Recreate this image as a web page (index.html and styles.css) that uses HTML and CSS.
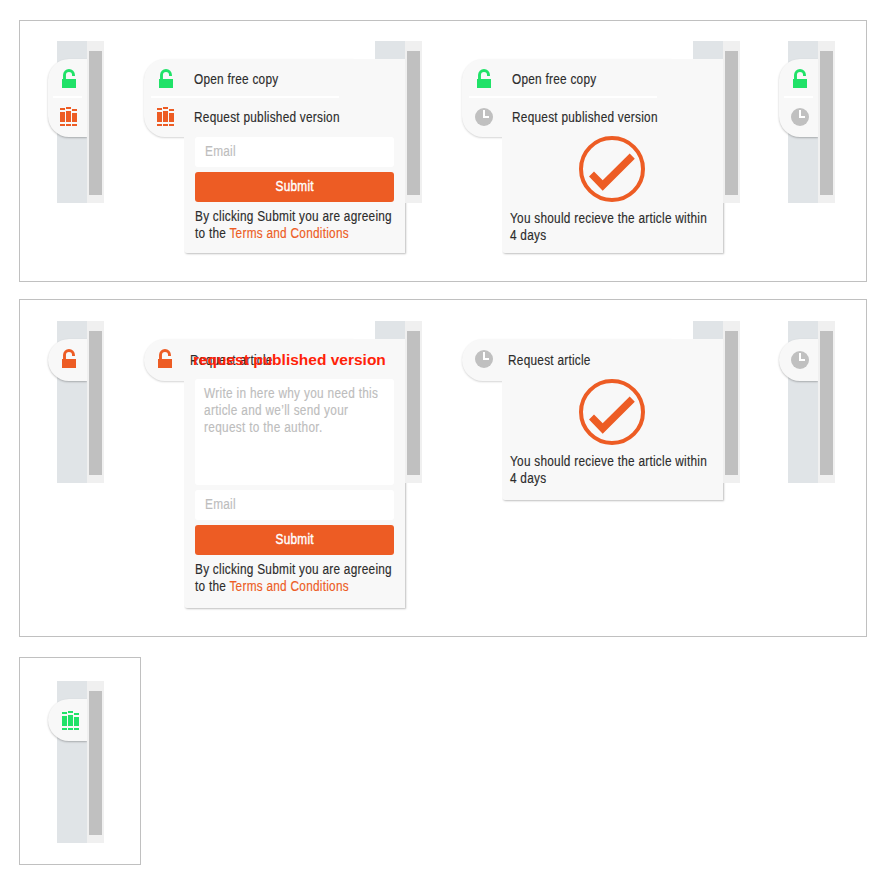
FILE: index.html
```html
<!DOCTYPE html>
<html lang="en">
<head>
<meta charset="utf-8">
<title>Article access widget</title>
<link rel="stylesheet" href="styles.css">
</head>
<body>
<svg class="sprite">
  <symbol id="lock" viewBox="0 0 14 19"><path d="M0 10H14V19H0Z" fill="currentColor"/><path d="M2.5 11V6a4.5 4.5 0 0 1 9 0V7" fill="none" stroke="currentColor" stroke-width="2.9"/></symbol>
  <symbol id="books" viewBox="0 0 17 19"><path fill="currentColor" d="M0 1h5v2H0zM6 0h5v2H6zM12 2h5v2h-5zM0 5h5v10H0zM6 4h5v11H6zM12 6h5v9h-5zM0 17h5v2H0zM6 17h5v2H6zM12 17h5v2h-5z"/></symbol>
  <symbol id="clock" viewBox="0 0 18 18"><circle cx="9" cy="9" r="9" fill="currentColor"/><path d="M8 2h2v6h4v2H8z" fill="#fff"/></symbol>
  <symbol id="check" viewBox="0 0 66 66"><circle cx="33" cy="33" r="31" fill="none" stroke="currentColor" stroke-width="4"/><path fill="currentColor" d="M10 40.5L15 35.6L23.7 44.3L50.7 17.6L55.8 22.7L23.7 54.8Z"/></symbol>
</svg>
<main class="board">
  <section class="panel panel-first">
    <div class="widget">
      <div class="strip"><div class="track"><div class="thumb"></div></div></div>
      <div class="callout closed double">
        <div class="tab"></div>
        <div class="rows">
          <div class="row"><svg class="lock green"><use href="#lock"/></svg></div>
          <div class="rule"></div>
          <div class="row"><svg class="books orange"><use href="#books"/></svg></div>
        </div>
      </div>
    </div>
    <div class="widget">
      <div class="strip"><div class="track"><div class="thumb"></div></div></div>
      <div class="callout open double">
        <div class="tab"></div>
        <div class="card">
          <div class="field"><span class="t">Email</span></div>
          <div class="submit"><span class="t">Submit</span></div>
          <p class="t terms">By clicking Submit you are agreeing<br>to the <a>Terms and Conditions</a></p>
        </div>
        <div class="rows">
          <div class="row"><svg class="lock green"><use href="#lock"/></svg><span class="t">Open free copy</span></div>
          <div class="rule"></div>
          <div class="row"><svg class="books orange"><use href="#books"/></svg><span class="t">Request published version</span></div>
        </div>
      </div>
    </div>
    <div class="widget">
      <div class="strip"><div class="track"><div class="thumb"></div></div></div>
      <div class="callout open double">
        <div class="tab"></div>
        <div class="card done">
          <svg class="check orange"><use href="#check"/></svg>
          <p class="t result">You should recieve the article within<br>4 days</p>
        </div>
        <div class="rows">
          <div class="row"><svg class="lock green"><use href="#lock"/></svg><span class="t">Open free copy</span></div>
          <div class="rule"></div>
          <div class="row"><svg class="clock grey"><use href="#clock"/></svg><span class="t">Request published version</span></div>
        </div>
      </div>
    </div>
    <div class="widget last">
      <div class="strip"><div class="track"><div class="thumb"></div></div></div>
      <div class="callout closed double">
        <div class="tab"></div>
        <div class="rows">
          <div class="row"><svg class="lock green"><use href="#lock"/></svg></div>
          <div class="rule"></div>
          <div class="row"><svg class="clock grey"><use href="#clock"/></svg></div>
        </div>
      </div>
    </div>
  </section>

  <section class="panel panel-second">
    <div class="widget">
      <div class="strip"><div class="track"><div class="thumb"></div></div></div>
      <div class="callout closed single">
        <div class="tab"></div>
        <div class="rows"><div class="row"><svg class="lock orange"><use href="#lock"/></svg></div></div>
      </div>
    </div>
    <div class="widget">
      <div class="strip"><div class="track"><div class="thumb"></div></div></div>
      <div class="callout open single">
        <div class="tab"></div>
        <div class="card tall">
          <div class="field area"><span class="t">Write in here why you need this<br>article and we’ll send your<br>request to the author.</span></div>
          <div class="field"><span class="t">Email</span></div>
          <div class="submit"><span class="t">Submit</span></div>
          <p class="t terms">By clicking Submit you are agreeing<br>to the <a>Terms and Conditions</a></p>
        </div>
        <div class="rows"><div class="row request"><svg class="lock orange"><use href="#lock"/></svg><span class="t">Request article</span><span class="note">request published version</span></div></div>
      </div>
    </div>
    <div class="widget">
      <div class="strip"><div class="track"><div class="thumb"></div></div></div>
      <div class="callout open single">
        <div class="tab"></div>
        <div class="card done short">
          <svg class="check orange"><use href="#check"/></svg>
          <p class="t result">You should recieve the article within<br>4 days</p>
        </div>
        <div class="rows"><div class="row"><svg class="clock grey"><use href="#clock"/></svg><span class="t">Request article</span></div></div>
      </div>
    </div>
    <div class="widget last">
      <div class="strip"><div class="track"><div class="thumb"></div></div></div>
      <div class="callout closed single">
        <div class="tab"></div>
        <div class="rows"><div class="row"><svg class="clock grey"><use href="#clock"/></svg></div></div>
      </div>
    </div>
  </section>

  <section class="panel panel-third">
    <div class="widget">
      <div class="strip"><div class="track"><div class="thumb"></div></div></div>
      <div class="callout closed single">
        <div class="tab"></div>
        <div class="rows"><div class="row"><svg class="books green"><use href="#books"/></svg></div></div>
      </div>
    </div>
  </section>
</main>
</body>
</html>
```
FILE: styles.css
```css
* { box-sizing: border-box; }
body { margin: 0; background: #fff; color: #2c2c2c; font: 14px/17px "Liberation Sans", Arial, sans-serif; }
p { margin: 0; }
svg { display: block; flex: none; }
.sprite { width: 0; height: 0; float: left; }
.board { padding: 20px 0 0 19px; }

.panel { display: flex; align-items: flex-start; gap: 40px; width: 848px; padding: 20px 0 0 28px; border: 1px solid #c0c0c0; }
.panel-first { height: 262px; }
.panel-second { height: 338px; margin-top: 17px; padding-top: 21px; }
.panel-third { width: 122px; height: 208px; margin-top: 20px; padding-top: 23px; }

/* Page edge with its scrollbar, and the callout stacked over it */
.widget { display: grid; flex: none; }
.widget.last { margin-left: -1px; }
.widget > * { grid-area: 1 / 1; }
.strip { display: flex; justify-content: flex-end; justify-self: end; width: 47px; height: 162px; background: #e0e4e7; }
.track { position: relative; z-index: 1; width: 17px; padding: 10px 2px; background: #f0f0f0; }
.thumb { height: 144px; background: #c0c0c0; }

.callout { display: grid; align-items: start; justify-items: start; margin: 18px 17px 0 0; }
.callout > * { grid-area: 1 / 1; }
.callout.open { width: 261px; }
.closed { width: 39px; }
.tab { width: 100%; background: #f8f8f8; border-radius: 21px 0 0 21px; box-shadow: 0 1px 2px rgba(0, 0, 0, .25); }
.open .tab { width: 210px; box-shadow: 0 1px 2px rgba(0, 0, 0, .17); }
.double .tab { height: 78px; }
.single .tab { height: 42px; }
.card { width: 221px; height: 194px; margin-left: 40px; padding: 78px 11px 0; background: #f8f8f8; border-radius: 0 0 0 3px; box-shadow: 1px 1px 2px rgba(0, 0, 0, .25); clip-path: inset(0 -4px -4px 0); }
.card.tall { height: 269px; padding-top: 40px; }
.card.done { padding: 77px 8px 0; }
.card.done.short { height: 161px; padding-top: 40px; }

.rows { position: relative; width: 100%; }
.row { display: flex; height: 37px; padding: 10px 0 0 13px; white-space: nowrap; }
.rule { width: 188px; height: 2px; margin-left: 7px; background: #fff; }
.rule + .row { padding-top: 9px; }
.closed .row { padding-left: 12px; }
.closed .rule { width: 29px; margin-left: 5px; }
.lock { width: 14px; height: 19px; margin: 0 2px; }
.books { width: 17px; height: 19px; margin-right: 1px; }
.clock { width: 18px; height: 18px; margin-top: 1px; }
.row .t { margin: 2px 0 0 19px; }
.single .row .t { margin: 3px 0 0 15px; }
.request .lock { margin: 0 3px 0 1px; }
.single .books { margin: 2px 0 0 2px; }
.closed.single .clock { margin-top: 2px; }
/* The correction is stamped over the original label */
.note { position: relative; width: 0; margin: 2px 0 0 -95px; color: #ff2208; font-size: 15.5px; font-weight: bold; }

.green { color: #20e268; }
.orange { color: #ed5c24; }
.grey { color: #c0c0c0; }

/* Condensed grotesque lettering */
.t { display: inline-block; transform: scaleX(.845); transform-origin: 0 0; letter-spacing: .3px; white-space: nowrap; -webkit-text-stroke: .15px currentColor; }
.field { height: 30px; margin-bottom: 5px; padding: 6px 0 0 10px; background: #fff; border-radius: 3px; color: #bdbdbd; }
.area { height: 106px; padding: 6px 0 0 9px; }
.area .t { letter-spacing: .36px; }
.submit { height: 30px; padding-top: 6px; background: #ed5c24; border-radius: 3px; color: #fff; text-align: center; }
.submit .t { transform-origin: 50% 0; -webkit-text-stroke-width: .4px; }
.terms { margin-top: 6px; }
.terms a { color: #ed5c24; }
.check { width: 66px; height: 66px; margin-left: 69px; }
.result { margin-top: 8px; }
```
